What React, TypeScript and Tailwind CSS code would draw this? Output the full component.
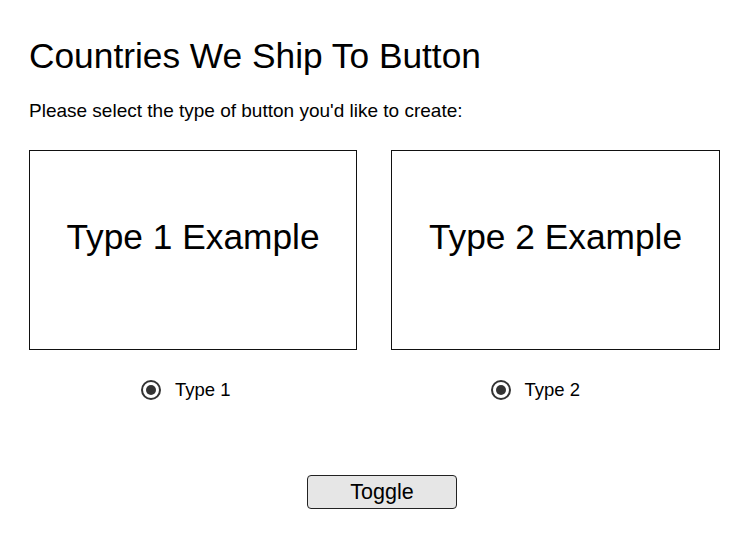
export default function App() {
  const font = { fontFamily: '"Liberation Sans", Arial, sans-serif' };
  const Radio = () => (
    <span className="flex h-[20px] w-[20px] items-center justify-center rounded-full border-2 border-[#333]">
      <span className="h-[10px] w-[10px] rounded-full bg-[#333]" />
    </span>
  );
  return (
    <div className="min-h-[552px] w-[738px] bg-white pl-[29px] text-black" style={font}>
      <h1 className="pt-[36px] text-[35.3px] leading-[40px]">Countries We Ship To Button</h1>
      <p className="mt-[24px] text-[19px] leading-[22px]">Please select the type of button you'd like to create:</p>
      <div className="mt-[28px] flex gap-[34px]">
        <div className="flex h-[200px] w-[328px] justify-center border border-[#111] pt-[66px]">
          <span className="text-[35.3px] leading-[40px]">Type 1 Example</span>
        </div>
        <div className="flex h-[200px] w-[329px] justify-center border border-[#111] pt-[66px]">
          <span className="text-[35.3px] leading-[40px]">Type 2 Example</span>
        </div>
      </div>
      <div className="mt-[30px] flex">
        <label className="ml-[112px] flex items-center gap-[14px] text-[18.5px] leading-[20px]">
          <Radio />
          <span>Type 1</span>
        </label>
        <label className="ml-[260px] flex items-center gap-[14px] text-[18.5px] leading-[20px]">
          <Radio />
          <span>Type 2</span>
        </label>
      </div>
      <button className="ml-[278px] mt-[75px] flex h-[34px] w-[150px] items-center justify-center rounded-[4px] border border-[#222] bg-[#e6e6e6] text-[21.5px]">
        Toggle
      </button>
    </div>
  );
}
